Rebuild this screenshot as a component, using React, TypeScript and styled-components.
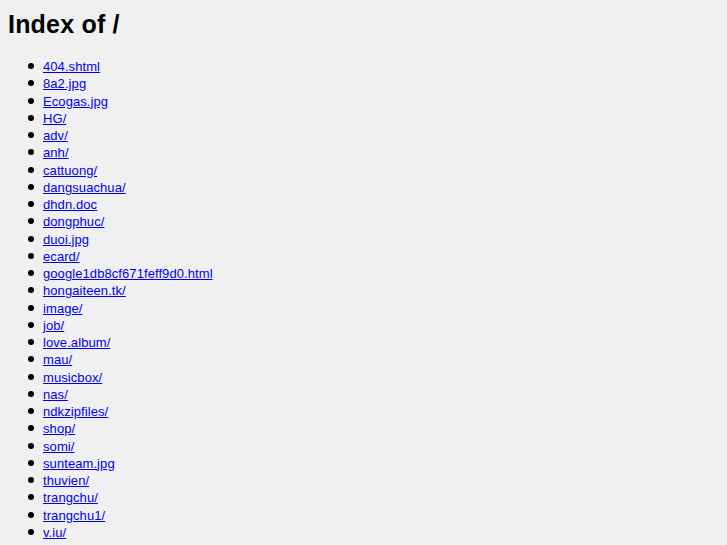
import React from "react";
import styled, { createGlobalStyle } from "styled-components";

const Global = createGlobalStyle`
  html, body { margin: 0; padding: 0; background: #f0f0f0; }
  body { padding: 8px; font-family: "Liberation Sans", Arial, sans-serif; color: #000; }
`;

const Title = styled.h1`
  font-size: 25px;
  font-weight: bold;
  letter-spacing: 0.2px;
  margin: 0;
  padding-top: 2px;
  line-height: 29px;
`;

const List = styled.ul`
  margin: 19px 0 0 0;
  padding-left: 35px;
  list-style: none;
`;

const Item = styled.li`
  font-size: 13px;
  line-height: 17.25px;
  letter-spacing: 0.08px;
  &::before {
    content: "";
    display: inline-block;
    width: 6px;
    height: 6px;
    border-radius: 50%;
    background: #000;
    margin-left: -15px;
    margin-right: 9px;
    vertical-align: 2px;
  }
`;

const Link = styled.a`
  color: #0000ee;
  text-decoration: underline;
`;

const files = [
  "404.shtml", "8a2.jpg", "Ecogas.jpg", "HG/", "adv/", "anh/", "cattuong/",
  "dangsuachua/", "dhdn.doc", "dongphuc/", "duoi.jpg", "ecard/",
  "google1db8cf671feff9d0.html", "hongaiteen.tk/", "image/", "job/",
  "love.album/", "mau/", "musicbox/", "nas/", "ndkzipfiles/", "shop/",
  "somi/", "sunteam.jpg", "thuvien/", "trangchu/", "trangchu1/", "v.iu/",
];

export default function App() {
  return (
    <>
      <Global />
      <Title>Index of /</Title>
      <List>
        {files.map((f) => (
          <Item key={f}>
            <Link href="#">{f}</Link>
          </Item>
        ))}
      </List>
    </>
  );
}
